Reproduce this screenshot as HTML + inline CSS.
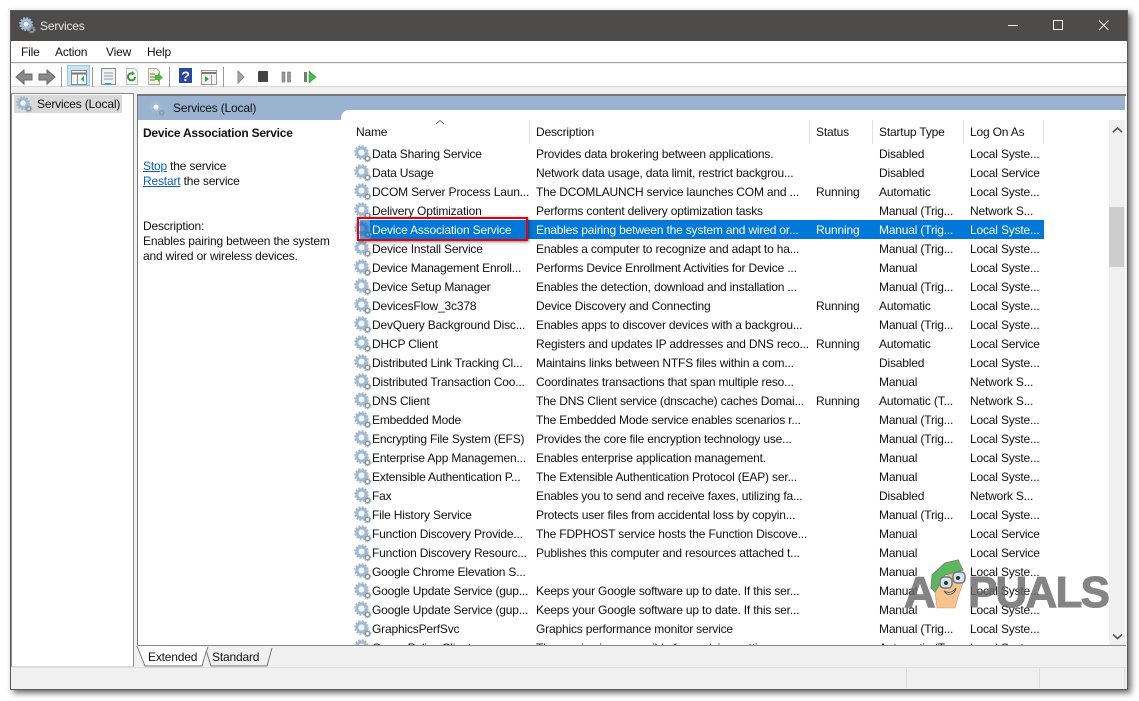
<!DOCTYPE html>
<html><head><meta charset="utf-8"><title>Services</title>
<style>
html,body{margin:0;padding:0;background:#fff;width:1139px;height:701px;overflow:hidden}
*{box-sizing:border-box}
body{font:12px/16px "Liberation Sans",sans-serif;color:#111;position:relative;letter-spacing:-.18px}
.a{position:absolute;white-space:nowrap}
#win{position:absolute;left:10px;top:10px;width:1118px;height:680px;background:#f0f0f0;border:1px solid #5a5a5a;box-shadow:3px 3px 6px rgba(0,0,0,.6)}
.r{position:relative;height:19px;line-height:19px;white-space:nowrap}
.r span{position:absolute;top:1px}
.r svg{position:absolute;left:13px;top:1px}
.n{left:31px}.d{left:195px}.s{left:475px}.t{left:538px}.l{left:629px}
.sel{background:#0078d7;color:#fff;margin-left:29px;width:674px}
.sel svg{left:-16px}.sel .n{left:2px}.sel .d{left:166px}.sel .s{left:446px}.sel .t{left:509px}.sel .l{left:600px}
.sep{position:absolute;top:120px;width:1px;height:24px;background:#e3e3e3}
a{color:#0a5dc2;text-decoration:underline}
.tb{position:absolute;top:0;left:0}
</style></head><body>
<svg width="0" height="0" style="position:absolute"><defs>
<symbol id="g" viewBox="0 0 18 18">
<circle cx="7.500" cy="7.500" r="4.500" fill="none" stroke="#9dbbd6" stroke-width="3"/>
<circle cx="7.500" cy="7.500" r="6.500" fill="none" stroke="#a9b6c2" stroke-width="1.600" stroke-dasharray="2 1.400"/>
<circle cx="7.500" cy="7.500" r="2.800" fill="#f2f7fc"/>
<circle cx="13.500" cy="13.500" r="2.200" fill="none" stroke="#8a96a2" stroke-width="1.500"/>
<circle cx="13.500" cy="13.500" r="3.400" fill="none" stroke="#a4aeb8" stroke-width="1" stroke-dasharray="1.200 1"/>
</symbol></defs></svg>

<div id="win"></div>
<!-- title bar -->
<div class="a" style="left:11px;top:11px;width:1116px;height:30px;background:#4e4c4a"></div>
<svg class="a" style="left:19px;top:17px" width="17" height="17"><use href="#g"/></svg>
<div class="a" style="left:40px;top:18px;color:#e8e8e8">Services</div>
<svg class="tb" width="1139" height="41">
<path d="M1008 25.500h10" stroke="#eee" stroke-width="1"/>
<rect x="1053.500" y="20.500" width="9" height="9" fill="none" stroke="#eee"/>
<path d="M1099 20.500l9.500 9.500M1108.500 20.500l-9.500 9.500" stroke="#eee" fill="none"/>
</svg>
<!-- menu -->
<div class="a" style="left:11px;top:41px;width:1116px;height:22px;background:#fff;border-bottom:1px solid #a0a0a0"></div>
<div class="a" style="left:21px;top:44px">File</div>
<div class="a" style="left:55px;top:44px">Action</div>
<div class="a" style="left:106px;top:44px">View</div>
<div class="a" style="left:147px;top:44px">Help</div>
<!-- toolbar -->
<div class="a" style="left:11px;top:64px;width:1116px;height:23px;background:#fff;border-bottom:1px solid #d8d8d8"></div>
<svg class="tb" style="top:62px" width="340" height="30">
<path d="M16 15l8-7v4h8v6h-8v4z" fill="#8a8a8a" stroke="#666" stroke-width="1"/>
<path d="M55 15l-8-7v4h-8v6h8v4z" fill="#8a8a8a" stroke="#666" stroke-width="1"/>
<path d="M61.500 5v20M92.500 5v20M169.500 5v20M223.500 5v20" stroke="#999"/>
<rect x="67.500" y="3.500" width="22" height="20" fill="#cce4f7" stroke="#90c8f6"/>
<rect x="71.500" y="8.500" width="15" height="14" fill="#f4f4f4" stroke="#888"/>
<path d="M72 11.500h14" stroke="#777" stroke-width="2"/><path d="M77.500 12v10" stroke="#888"/>
<path d="M84 14v6l-3-3z" fill="#2ea52e"/>
<rect x="101.500" y="6.500" width="14" height="16" fill="#f2f2f2" stroke="#888"/>
<path d="M104 11h9M104 14h9M104 17h9" stroke="#8a9aaa"/><path d="M105 22h6" stroke="#30a0e0" stroke-width="2"/>
<path d="M126.500 6.500h8l3 3v13h-11z" fill="#fbfbfb" stroke="#bbb"/>
<path d="M135 15a3.500 3.500 0 1 1-1.500-3" fill="none" stroke="#2f9e2f" stroke-width="2"/><path d="M132 9l3 3-3 1z" fill="#2f9e2f"/>
<path d="M148.500 6.500h8l3 3v13h-11z" fill="#f8f3dc" stroke="#aaa"/>
<path d="M150 12h5M150 15h5M150 18h5" stroke="#666"/><path d="M155 13h3v-2l5 4.500-5 4.500v-2h-3z" fill="#4cb83c"/>
<rect x="179" y="6" width="13" height="15" fill="#2a47a8"/><text x="185.500" y="19" text-anchor="middle" font-family="Liberation Sans" font-weight="bold" font-size="14" fill="#fff">?</text>
<rect x="201.500" y="8.500" width="15" height="14" fill="#f2f2f2" stroke="#999"/><path d="M202 11h14" stroke="#777" stroke-width="2"/><path d="M211.500 13v9" stroke="#999"/><path d="M205 14v6l4-3z" fill="#2ea52e"/>
<path d="M238 9v12l6-6z" fill="#a8a8a8" stroke="#888"/>
<rect x="258" y="9" width="10" height="11" rx="1" fill="#444"/>
<rect x="282" y="10" width="3" height="10" fill="#999" stroke="#777" stroke-width=".6"/><rect x="287.500" y="10" width="3" height="10" fill="#999" stroke="#777" stroke-width=".6"/>
<rect x="304" y="10" width="3" height="10" fill="#777"/><path d="M309 9v12l7-6z" fill="#3fc23f" stroke="#2a9a2a" stroke-width=".6"/>
</svg>
<!-- left panel -->
<div class="a" style="left:11px;top:93px;width:123px;height:574px;background:#fff;border:1px solid #8a8a8a;border-bottom-color:#ddd"></div>
<div class="a" style="left:14px;top:95px;width:108px;height:18px;background:#d9d9d9"></div>
<svg class="a" style="left:16px;top:96px" width="17" height="17"><use href="#g"/></svg>
<div class="a" style="left:37px;top:96px">Services (Local)</div>
<!-- right panel -->
<div class="a" style="left:137px;top:94px;width:989px;height:552px;background:#fff;border-top:2px solid #777;border-left:1px solid #777"></div>
<div class="a" style="left:138px;top:96px;width:987px;height:14px;background:#9ab3d0"></div>
<div class="a" style="left:138px;top:110px;width:203px;height:10px;background:#9ab3d0"></div>
<div class="a" style="left:341px;top:110px;width:8px;height:8px;background:#fff;border-top-left-radius:8px;box-shadow:-8px -8px 0 8px #9ab3d0;clip-path:inset(0)"></div>
<svg class="a" style="left:149px;top:100px" width="17" height="17"><use href="#g"/></svg>
<div class="a" style="left:173px;top:100px">Services (Local)</div>
<div class="a" style="left:143px;top:125px;font-weight:bold;letter-spacing:-.23px">Device Association Service</div>
<div class="a" style="left:143px;top:158px"><a>Stop</a> the service</div>
<div class="a" style="left:143px;top:173px"><a>Restart</a> the service</div>
<div class="a" style="left:143px;top:218px">Description:</div>
<div class="a" style="left:143px;top:233px">Enables pairing between the system</div>
<div class="a" style="left:143px;top:248px">and wired or wireless devices.</div>
<!-- header -->
<div class="a" style="left:356px;top:124px">Name</div>
<div class="a" style="left:536px;top:124px">Description</div>
<div class="a" style="left:816px;top:124px">Status</div>
<div class="a" style="left:879px;top:124px">Startup Type</div>
<div class="a" style="left:970px;top:124px">Log On As</div>
<div class="sep" style="left:529px"></div><div class="sep" style="left:809px"></div><div class="sep" style="left:872px"></div><div class="sep" style="left:963px"></div><div class="sep" style="left:1043px"></div>
<svg class="tb" width="1139" height="140"><path d="M436 124l4-3.500 4 3.500" fill="none" stroke="#777"/></svg>
<!-- rows -->
<div class="a" style="left:341px;top:144px;width:768px;height:501px;overflow:hidden">
<div class="r"><svg width="18" height="18"><use href="#g"/></svg><span class="n">Data Sharing Service</span><span class="d">Provides data brokering between applications.</span><span class="t">Disabled</span><span class="l">Local Syste...</span></div>
<div class="r"><svg width="18" height="18"><use href="#g"/></svg><span class="n">Data Usage</span><span class="d">Network data usage, data limit, restrict backgrou...</span><span class="t">Disabled</span><span class="l">Local Service</span></div>
<div class="r"><svg width="18" height="18"><use href="#g"/></svg><span class="n">DCOM Server Process Laun...</span><span class="d">The DCOMLAUNCH service launches COM and ...</span><span class="s">Running</span><span class="t">Automatic</span><span class="l">Local Syste...</span></div>
<div class="r"><svg width="18" height="18"><use href="#g"/></svg><span class="n">Delivery Optimization</span><span class="d">Performs content delivery optimization tasks</span><span class="t">Manual (Trig...</span><span class="l">Network S...</span></div>
<div class="r sel"><svg width="18" height="18"><use href="#g"/></svg><span class="n">Device Association Service</span><span class="d">Enables pairing between the system and wired or...</span><span class="s">Running</span><span class="t">Manual (Trig...</span><span class="l">Local Syste...</span></div>
<div class="r"><svg width="18" height="18"><use href="#g"/></svg><span class="n">Device Install Service</span><span class="d">Enables a computer to recognize and adapt to ha...</span><span class="t">Manual (Trig...</span><span class="l">Local Syste...</span></div>
<div class="r"><svg width="18" height="18"><use href="#g"/></svg><span class="n">Device Management Enroll...</span><span class="d">Performs Device Enrollment Activities for Device ...</span><span class="t">Manual</span><span class="l">Local Syste...</span></div>
<div class="r"><svg width="18" height="18"><use href="#g"/></svg><span class="n">Device Setup Manager</span><span class="d">Enables the detection, download and installation ...</span><span class="t">Manual (Trig...</span><span class="l">Local Syste...</span></div>
<div class="r"><svg width="18" height="18"><use href="#g"/></svg><span class="n">DevicesFlow_3c378</span><span class="d">Device Discovery and Connecting</span><span class="s">Running</span><span class="t">Automatic</span><span class="l">Local Syste...</span></div>
<div class="r"><svg width="18" height="18"><use href="#g"/></svg><span class="n">DevQuery Background Disc...</span><span class="d">Enables apps to discover devices with a backgrou...</span><span class="t">Manual (Trig...</span><span class="l">Local Syste...</span></div>
<div class="r"><svg width="18" height="18"><use href="#g"/></svg><span class="n">DHCP Client</span><span class="d">Registers and updates IP addresses and DNS reco...</span><span class="s">Running</span><span class="t">Automatic</span><span class="l">Local Service</span></div>
<div class="r"><svg width="18" height="18"><use href="#g"/></svg><span class="n">Distributed Link Tracking Cl...</span><span class="d">Maintains links between NTFS files within a com...</span><span class="t">Disabled</span><span class="l">Local Syste...</span></div>
<div class="r"><svg width="18" height="18"><use href="#g"/></svg><span class="n">Distributed Transaction Coo...</span><span class="d">Coordinates transactions that span multiple reso...</span><span class="t">Manual</span><span class="l">Network S...</span></div>
<div class="r"><svg width="18" height="18"><use href="#g"/></svg><span class="n">DNS Client</span><span class="d">The DNS Client service (dnscache) caches Domai...</span><span class="s">Running</span><span class="t">Automatic (T...</span><span class="l">Network S...</span></div>
<div class="r"><svg width="18" height="18"><use href="#g"/></svg><span class="n">Embedded Mode</span><span class="d">The Embedded Mode service enables scenarios r...</span><span class="t">Manual (Trig...</span><span class="l">Local Syste...</span></div>
<div class="r"><svg width="18" height="18"><use href="#g"/></svg><span class="n">Encrypting File System (EFS)</span><span class="d">Provides the core file encryption technology use...</span><span class="t">Manual (Trig...</span><span class="l">Local Syste...</span></div>
<div class="r"><svg width="18" height="18"><use href="#g"/></svg><span class="n">Enterprise App Managemen...</span><span class="d">Enables enterprise application management.</span><span class="t">Manual</span><span class="l">Local Syste...</span></div>
<div class="r"><svg width="18" height="18"><use href="#g"/></svg><span class="n">Extensible Authentication P...</span><span class="d">The Extensible Authentication Protocol (EAP) ser...</span><span class="t">Manual</span><span class="l">Local Syste...</span></div>
<div class="r"><svg width="18" height="18"><use href="#g"/></svg><span class="n">Fax</span><span class="d">Enables you to send and receive faxes, utilizing fa...</span><span class="t">Disabled</span><span class="l">Network S...</span></div>
<div class="r"><svg width="18" height="18"><use href="#g"/></svg><span class="n">File History Service</span><span class="d">Protects user files from accidental loss by copyin...</span><span class="t">Manual (Trig...</span><span class="l">Local Syste...</span></div>
<div class="r"><svg width="18" height="18"><use href="#g"/></svg><span class="n">Function Discovery Provide...</span><span class="d">The FDPHOST service hosts the Function Discove...</span><span class="t">Manual</span><span class="l">Local Service</span></div>
<div class="r"><svg width="18" height="18"><use href="#g"/></svg><span class="n">Function Discovery Resourc...</span><span class="d">Publishes this computer and resources attached t...</span><span class="t">Manual</span><span class="l">Local Service</span></div>
<div class="r"><svg width="18" height="18"><use href="#g"/></svg><span class="n">Google Chrome Elevation S...</span><span class="t">Manual</span><span class="l">Local Syste...</span></div>
<div class="r"><svg width="18" height="18"><use href="#g"/></svg><span class="n">Google Update Service (gup...</span><span class="d">Keeps your Google software up to date. If this ser...</span><span class="t">Manual</span><span class="l">Local Syste...</span></div>
<div class="r"><svg width="18" height="18"><use href="#g"/></svg><span class="n">Google Update Service (gup...</span><span class="d">Keeps your Google software up to date. If this ser...</span><span class="t">Manual</span><span class="l">Local Syste...</span></div>
<div class="r"><svg width="18" height="18"><use href="#g"/></svg><span class="n">GraphicsPerfSvc</span><span class="d">Graphics performance monitor service</span><span class="t">Manual (Trig...</span><span class="l">Local Syste...</span></div>
<div class="r"><svg width="18" height="18"><use href="#g"/></svg><span class="n">Group Policy Client</span><span class="d">The service is responsible for applying settings c...</span><span class="t">Automatic (T...</span><span class="l">Local Syste...</span></div>
</div>
<!-- dithered selected icon -->
<div class="a" style="left:360px;top:220px;width:10px;height:19px;background:rgba(0,100,190,.65)"></div>
<!-- red highlight -->
<div class="a" style="left:357px;top:217px;width:171px;height:24px;border:2px solid #e8000c;box-shadow:1px 1px 3px rgba(0,0,0,.5)"></div>
<!-- scrollbar -->
<div class="a" style="left:1109px;top:120px;width:16px;height:525px;background:#f0f0f0"></div>
<div class="a" style="left:1109px;top:207px;width:15px;height:60px;background:#cdcdcd"></div>
<svg class="tb" width="1139" height="650"><path d="M1113 132l4.500-4 4.500 4" fill="none" stroke="#555" stroke-width="1.600"/><path d="M1113 634.500l4.500 4 4.500-4" fill="none" stroke="#555" stroke-width="1.600"/></svg>
<!-- tabs -->
<div class="a" style="left:137px;top:645px;width:989px;height:1px;background:#8a8a8a"></div>
<div class="a" style="left:134px;top:667px;width:993px;height:1px;background:#ddd"></div>
<svg class="tb" width="400" height="670">
<path d="M205 647l6 19h56l5-18" fill="#f0f0f0" stroke="#777"/>
<path d="M137 646l8 20h57l4-14 2-5" fill="#fff" stroke="#777"/>
</svg>
<div class="a" style="left:148px;top:649px">Extended</div>
<div class="a" style="left:212px;top:649px">Standard</div>
<!-- status bar -->
<div class="a" style="left:11px;top:667px;width:1116px;height:1px;background:#ddd"></div>
<div class="a" style="left:906px;top:668px;width:1px;height:20px;background:#dcdcdc"></div>
<div class="a" style="left:1039px;top:668px;width:1px;height:20px;background:#dcdcdc"></div>
<div class="a" style="left:1124px;top:668px;width:1px;height:20px;background:#dcdcdc"></div>
<!-- watermark -->
<div class="a" style="left:904px;top:568px;font:bold 44px/50px 'Liberation Sans',sans-serif;color:#666;opacity:.8;-webkit-text-stroke:1px #666;letter-spacing:0">A</div>
<div class="a" style="left:968px;top:568px;font:bold 44px/50px 'Liberation Sans',sans-serif;color:#666;opacity:.8;-webkit-text-stroke:1px #666;letter-spacing:-1.800px">PUALS</div>
<svg class="a" style="left:925px;top:556px" width="48" height="58" viewBox="0 0 48 58">
<path d="M10 36L23 19l15-3v11l-5 14-3 11H12z" fill="#f6c48a" stroke="#c89a66" stroke-width=".6"/>
<path d="M6 32L7 19 20 7 33 4l5 10-18 5-10 17z" fill="#5cb85c" stroke="#808080" stroke-width="1"/>
<rect x="15" y="21" width="12" height="11" rx="4" fill="#cfe6f2" stroke="#777" stroke-width="1.500"/>
<rect x="28" y="16" width="12" height="11" rx="4" fill="#cfe6f2" stroke="#777" stroke-width="1.500"/>
<circle cx="21" cy="27" r="2" fill="#333"/><circle cx="33" cy="22" r="2" fill="#333"/>
<path d="M19 35c5 3 9 1 12-3-1 6-8 9-12 3z" fill="#fff" stroke="#555"/>
</svg>
</body></html>
